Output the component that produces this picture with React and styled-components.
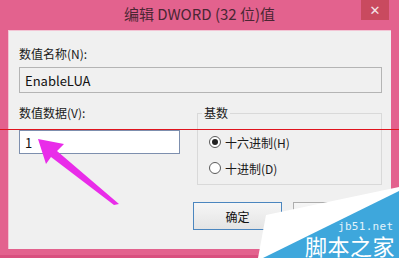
import React from "react";
import styled, { createGlobalStyle } from "styled-components";

const GlobalStyle = createGlobalStyle`
  html, body { margin: 0; padding: 0; background: #ffffff; }
  body { font-family: "Noto Sans CJK SC", "Noto Sans", sans-serif; }
  * { box-sizing: border-box; }
`;

const Window = styled.div`
  position: relative;
  width: 399px;
  height: 258px;
  overflow: hidden;
  background: #e3628e;
  display: flex;
  flex-direction: column;
  box-shadow: inset 0 -6px 0 -3px #d9507f;
`;

const TitleBar = styled.div`
  height: 30px;
  display: grid;
  grid-template-columns: 1fr auto 1fr;
  align-items: start;
`;

const Title = styled.div`
  grid-column: 2;
  padding-top: 4px;
  font-size: 15px;
  line-height: 20px;
  color: #4a2633;
  white-space: nowrap;
`;

const CloseButton = styled.div`
  grid-column: 3;
  justify-self: end;
  margin-right: 10px;
  width: 28px;
  height: 20px;
  background: #c94a5f;
  color: #f4e3e6;
  display: flex;
  align-items: center;
  justify-content: center;
  font-family: "DejaVu Sans", sans-serif;
  font-size: 13px;
  font-weight: bold;
`;

const Body = styled.div`
  flex: 1;
  margin: 0 8px 9px 8px;
  background: #f0f0f0;
  border-left: 1px solid #f3c4d4;
  border-top: 1px solid #f3c4d4;
  padding: 15px 9px 0 10px;
  display: flex;
  flex-direction: column;
`;

const Label = styled.div`
  font-size: 12px;
  line-height: 16px;
  color: #1a1a1a;
  white-space: nowrap;
`;

const ReadonlyField = styled.div`
  margin-top: 5px;
  height: 26px;
  border: 1px solid #b4b4b4;
  background: #f0f0f0;
  padding-left: 5px;
  display: flex;
  align-items: center;
  font-size: 13px;
  color: #111;
`;

const Lower = styled.div`
  margin-top: 12px;
  display: grid;
  grid-template-columns: 161px 1fr;
  column-gap: 17px;
  align-items: start;
`;

const LeftColumn = styled.div`
  display: flex;
  flex-direction: column;
`;

const ValueInput = styled.div`
  margin-top: 9px;
  height: 24px;
  border: 1px solid #7d8fae;
  background: #ffffff;
  padding-left: 5px;
  display: flex;
  align-items: center;
  font-size: 13px;
  color: #111;
`;

const Group = styled.fieldset`
  margin: 0;
  min-width: 0;
  border: 1px solid #d9d9d9;
  padding: 12px 0 7px 11px;
  display: flex;
  flex-direction: column;
  gap: 8px;
`;

const Legend = styled.legend`
  margin-left: -7px;
  padding: 0 2px;
  font-size: 12px;
  line-height: 16px;
  color: #1a1a1a;
`;

const RadioRow = styled.div`
  height: 18px;
  display: flex;
  align-items: center;
  gap: 4px;
  font-size: 12px;
  color: #1a1a1a;
`;

const RadioCircle = styled.span`
  width: 12px;
  height: 12px;
  border-radius: 50%;
  border: 1px solid #5a5a5a;
  background: #ffffff;
  display: flex;
  align-items: center;
  justify-content: center;
  &::after {
    content: "";
    width: 6px;
    height: 6px;
    border-radius: 50%;
    background: ${(p) => (p.$checked ? "#222" : "transparent")};
  }
`;

const ButtonRow = styled.div`
  margin-top: 17px;
  display: flex;
  justify-content: flex-end;
  gap: 11px;
`;

const Button = styled.div`
  width: 89px;
  height: 28px;
  border: 1px solid ${(p) => (p.$default ? "#4b86bf" : "#adadad")};
  background: linear-gradient(#f6f6f6, #e4e4e4);
  display: flex;
  align-items: center;
  justify-content: center;
  font-size: 12px;
  color: #111;
`;

const RedLine = styled.div`
  position: absolute;
  left: 0;
  top: 129px;
  width: 399px;
  height: 1px;
  background: #e0141e;
`;

const Overlay = styled.svg`
  position: absolute;
  left: 0;
  top: 0;
  pointer-events: none;
`;

const Watermark = styled.div`
  position: absolute;
  left: 0;
  top: 0;
  width: 399px;
  height: 258px;
  pointer-events: none;
`;

const WmSite = styled.span`
  position: absolute;
  left: 338px;
  top: 221px;
  font-family: "DejaVu Sans Mono", monospace;
  font-size: 11px;
  line-height: 12px;
  letter-spacing: 0.3px;
  color: #e3f3fb;
  white-space: nowrap;
`;

const WmName = styled.span`
  position: absolute;
  left: 305px;
  top: 234px;
  font-family: "Noto Sans CJK SC", sans-serif;
  font-size: 22px;
  line-height: 22px;
  letter-spacing: 0.5px;
  color: #ffffff;
  white-space: nowrap;
`;

export default function App() {
  return (
    <>
      <GlobalStyle />
      <Window>
        <TitleBar>
          <Title>编辑 DWORD (32 位)值</Title>
          <CloseButton>✕</CloseButton>
        </TitleBar>
        <Body>
          <Label>数值名称(N):</Label>
          <ReadonlyField>EnableLUA</ReadonlyField>
          <Lower>
            <LeftColumn>
              <Label>数值数据(V):</Label>
              <ValueInput>1</ValueInput>
            </LeftColumn>
            <Group>
              <Legend>基数</Legend>
              <RadioRow>
                <RadioCircle $checked />
                十六进制(H)
              </RadioRow>
              <RadioRow>
                <RadioCircle />
                十进制(D)
              </RadioRow>
            </Group>
          </Lower>
          <ButtonRow>
            <Button $default>确定</Button>
            <Button>取消</Button>
          </ButtonRow>
        </Body>
        <RedLine />
        <Overlay width="399" height="258" viewBox="0 0 399 258">
          <polygon
            points="38,139 64,144 57,151 119,204 114,205 51,157 46,164"
            fill="#e92ce9"
          />
        </Overlay>
        <Watermark>
          <Overlay width="399" height="258" viewBox="0 0 399 258">
            <polygon points="258,258 266,215 399,187 399,258" fill="#ffffff" />
            <polygon points="263,258 399,191 399,258" fill="#3ea7dc" />
          </Overlay>
          <WmSite>jb51.net</WmSite>
          <WmName>脚本之家</WmName>
        </Watermark>
      </Window>
    </>
  );
}
